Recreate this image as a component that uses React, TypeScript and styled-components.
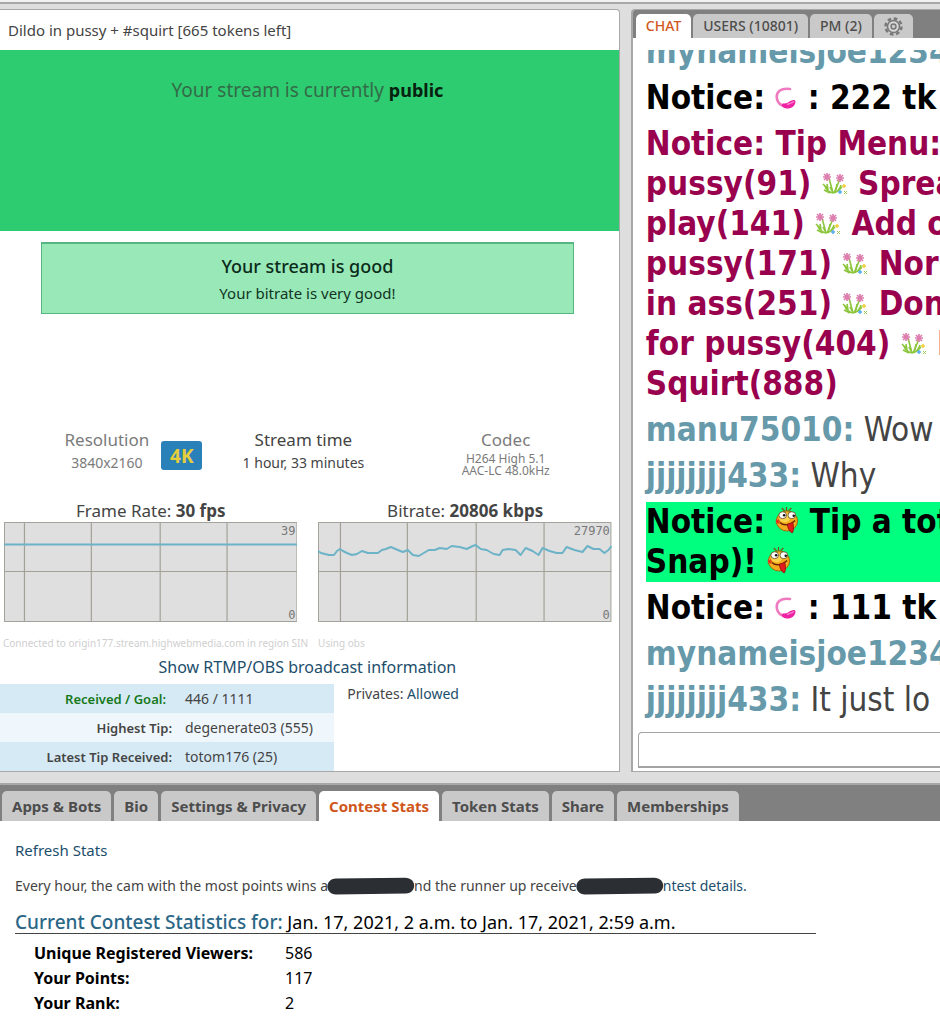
import React from "react";
import styled, { createGlobalStyle } from "styled-components";

const GlobalStyle = createGlobalStyle`
  * { box-sizing: border-box; }
  body {
    margin: 0;
    background: #fff;
    color: #444;
    font-family: "Noto Sans", "Open Sans", sans-serif;
    font-size: 14px;
    overflow-x: hidden;
  }
  a { color: #1c4e6c; text-decoration: none; }
`;

const TopStrip = styled.header`
  height: 4px;
  border-bottom: 2px solid #a8a8a8;
  background: #f1f1f1;
`;

const Workspace = styled.main`
  display: grid;
  grid-template-columns: minmax(0, 401fr) minmax(0, 200fr);
  gap: 11px;
  padding: 5px 0 11px;
  background: #dedede;
`;

/* ---------- broadcast panel ---------- */

const BroadcastPanel = styled.section`
  background: #fff;
  border: 1px solid #a8a8a8;
  border-left: 0;
  border-radius: 0 4px 0 0;
  overflow: hidden;
`;

const RoomSubject = styled.h1`
  margin: 0;
  padding: 0 8px;
  font-size: 15px;
  line-height: 40px;
  font-weight: 400;
`;

const StreamBanner = styled.div`
  height: 181px;
  padding-top: 28px;
  padding-right: 4px;
  background: #2ecc71;
  color: #336b47;
  font-size: 19px;
  line-height: 24px;
  text-align: center;
  strong { color: #06210f; font-weight: 700; font-size: 18px; }
`;

const HealthBox = styled.div`
  margin: 11px 45px 0 41px;
  padding: 9px 0 6px;
  border: 1px solid #56b581;
  border-top-width: 2px;
  background: #98e8b8;
  color: #123524;
  text-align: center;
`;

const HealthTitle = styled.div`
  font-size: 18px;
  line-height: 26px;
  font-weight: 500;
  color: #0b2b1a;
`;

const HealthText = styled.div`
  font-size: 15px;
  line-height: 28px;
`;

const StatsRow = styled.div`
  display: grid;
  grid-template-columns: repeat(3, 1fr);
  margin-top: 114px;
  padding-right: 12px;
`;

const Stat = styled.div<{ $dim?: boolean }>`
  color: ${(p) => (p.$dim ? "#7b7b7b" : "#444")};
  text-align: center;
`;

const StatWithBadge = styled.div`
  display: flex;
  justify-content: flex-end;
  gap: 12px;
`;

const StatLabel = styled.div`
  font-size: 17px;
  line-height: 24px;
`;

const StatValue = styled.div`
  font-size: 14px;
  line-height: 22px;
`;

const CodecValue = styled.div`
  font-size: 12px;
  line-height: 12px;
  padding-top: 1px;
`;

const QualityBadge = styled.span`
  margin-top: 13px;
  width: 41px;
  height: 29px;
  border-radius: 3px;
  background: #2a80b9;
  color: #e6cd3a;
  font-size: 19px;
  line-height: 30px;
  font-weight: 700;
  text-align: center;
`;

const Charts = styled.div`
  display: grid;
  grid-template-columns: 1fr 1fr;
  gap: 21px;
  padding: 22px 7px 0 4px;
`;

const ChartTitle = styled.div`
  font-size: 17px;
  line-height: 23px;
  text-align: center;
  strong { font-weight: 700; }
`;

const ChartFrame = styled.div`
  position: relative;
  height: 100px;
  svg { display: block; width: 100%; height: 100%; }
`;

const ChartScale = styled.div`
  position: absolute;
  inset: 0;
  display: flex;
  flex-direction: column;
  justify-content: space-between;
  align-items: flex-end;
  padding: 2px 2px 0;
  color: #777;
  font: 400 12px/14px "DejaVu Sans Mono", monospace;
`;

const OriginNote = styled.div`
  padding: 13px 3px 0;
  color: #cfcfcf;
  font-size: 10px;
  line-height: 16px;
  span { margin-left: 10px; }
`;

const EncoderLink = styled.div`
  padding: 4px 4px 5px 0;
  text-align: center;
  font-size: 16px;
  line-height: 24px;
`;

const TokenArea = styled.div`
  display: grid;
  grid-template-columns: 54% 1fr;
`;

const TokenTable = styled.table`
  width: 100%;
  border-collapse: collapse;
  tr { background: #d6eaf6; }
  tr:nth-child(even) { background: #f0f7fc; }
  th, td { height: 29px; padding: 0; }
  th { width: 172px; text-align: right; font-size: 13px; font-weight: 600; }
  td { padding-left: 13px; font-size: 14px; }
`;

const GoalHeading = styled.span`
  padding-right: 6px;
  color: #16791c;
`;

const Privates = styled.div`
  padding-left: 13px;
  line-height: 20px;
`;

/* ---------- chat panel ---------- */

const ChatPanel = styled.aside`
  display: flex;
  flex-direction: column;
  background: #fff;
  border: 1px solid #a8a8a8;
  border-width: 1px 0 1px 2px;
  border-radius: 4px 0 0 0;
  overflow: hidden;
`;

const ChatTabs = styled.nav`
  display: flex;
  align-items: flex-end;
  gap: 2px;
  height: 28px;
  flex: none;
  padding-left: 3px;
  background: #808080;
`;

const ChatTab = styled.button<{ $active?: boolean }>`
  height: 24px;
  flex: none;
  padding: 0 10px;
  border: 0;
  border-radius: 5px 5px 0 0;
  background: ${(p) => (p.$active ? "#fff" : "#c9c9c9")};
  color: ${(p) => (p.$active ? "#d0571b" : "#4d4d4d")};
  font: 500 14px/24px "Noto Sans", sans-serif;
  svg { display: block; }
`;

const Messages = styled.div`
  display: flex;
  flex-direction: column;
  justify-content: flex-end;
  gap: 6px;
  flex: 1 1 0;
  min-height: 0;
  margin-top: 12px;
  padding: 0 0 12px 13px;
  overflow: hidden;
  color: #444;
  font: 33px/40px "DejaVu Sans Condensed", "DejaVu Sans", sans-serif;
  white-space: nowrap;
`;

const Message = styled.div`
  flex: none;
`;

const Username = styled.strong`
  color: #6699aa;
`;

const Notice = styled.div<{ $color?: string; $fill?: string }>`
  flex: none;
  color: ${(p) => p.$color ?? "#000"};
  background: ${(p) => p.$fill ?? "transparent"};
  font-weight: 700;
  svg { display: inline-block; vertical-align: -1px; }
`;

const ChatInput = styled.input`
  flex: none;
  align-self: stretch;
  height: 36px;
  margin: 0 0 3px 5px;
  padding: 0 8px;
  border: 1px solid #a3a3a3;
  border-width: 1px 0 2px 1px;
  border-radius: 4px 0 0 0;
  background: #fff;
  font-size: 14px;
  outline: none;
`;

/* ---------- bottom area ---------- */

const PageTabs = styled.nav`
  display: flex;
  align-items: flex-end;
  gap: 3px;
  height: 38px;
  padding-left: 2px;
  border-top: 2px solid #a8a8a8;
  background: #808080;
`;

const PageTab = styled.button<{ $active?: boolean }>`
  height: 30px;
  flex: none;
  padding: 0 10px;
  border: 0;
  border-radius: 5px 5px 0 0;
  background: ${(p) => (p.$active ? "#fff" : "#c9c9c9")};
  color: ${(p) => (p.$active ? "#d0571b" : "#4d4d4d")};
  font: 700 15px/30px "Noto Sans", sans-serif;
`;

const StatsPage = styled.section`
  max-width: 832px;
  padding: 18px 16px 18px 15px;
`;

const RefreshLink = styled.a`
  font-size: 15px;
  line-height: 22px;
`;

const PrizeNote = styled.p`
  display: flex;
  align-items: center;
  margin: 13px 0;
  font-size: 14px;
  line-height: 24px;
  white-space: nowrap;
`;

const Redaction = styled.svg`
  flex: none;
  width: 88px;
  height: 18px;
  margin: 0 -1px;
  z-index: 1;
`;

const ContestHeading = styled.h2`
  margin: 0;
  border-bottom: 1px solid #444;
  color: #000;
  font-size: 18px;
  line-height: 22px;
  font-weight: 400;
  span { color: #2a6686; font-size: 19px; font-weight: 500; }
`;

const ContestTable = styled.table`
  margin-top: 6px;
  border-collapse: collapse;
  color: #000;
  font-size: 16px;
  line-height: 24px;
  th, td { height: 25px; padding: 0; text-align: left; }
  th { width: 270px; padding-left: 19px; font-weight: 700; }
`;

/* ---------- drawings ---------- */

const Toy = () => (
  <svg width="22" height="24" viewBox="2 0 22 24" aria-hidden="true">
    <path d="M17 3C8 1.500 2.500 6 4 13c.8 4 4 6.500 8 7" fill="none" stroke="#f07ac0" strokeWidth="2.600" strokeLinecap="round" />
    <path d="M9 18c2-1 3 0 6-1.500 3-2 7.500-4 7.500-.5-.3 4-4.500 7-9 6.500-3-.3-5.500-2.500-4.500-4.500z" fill="#ee22a2" />
    <path d="M14 18.500c2-.6 5-1.500 7-3" stroke="#fb84d0" strokeWidth="1.500" fill="none" />
  </svg>
);

const Flowers = () => (
  <svg width="26" height="24" viewBox="0 0 26 24" aria-hidden="true">
    <g fill="none" stroke="#8cc63c" strokeWidth="1.600">
      <path d="M7 6l4 15M18 7l-6 14M3 14c1 4 4 6 8 7M19 13c-1 5-4 7-8 8" />
      <path d="M1 12l4 4M5 12l1 6M8 15l2 4M15 12l-1 6M20 15l-4 4M2 18l6 3" />
    </g>
    <g fill="none" stroke="#dd7fae" strokeWidth="1.700">
      <path d="M5 1v8M1 5h8M2 2l6 6M8 2L2 8M18 2v8M14 6h8M15 3l6 6M21 3l-6 6" />
    </g>
    <path d="M20 14h4M22 12v4" stroke="#f0cf3a" strokeWidth="1.500" />
    <path d="M16 20h4M18 18v4" stroke="#55aef0" strokeWidth="1.500" />
    <path d="M22 19l3 3M25 19l-3 3" stroke="#9acb55" strokeWidth="1" />
  </svg>
);

const SillyFace = () => (
  <svg width="24" height="28" viewBox="0 0 25 29" aria-hidden="true">
    <path d="M12 6V1M10 5L7 2M14 5l3-3" stroke="#7d4a12" strokeWidth="1.200" />
    <ellipse cx="12.500" cy="15.500" rx="11" ry="10.500" fill="#f3ac1d" stroke="#a0640c" strokeWidth="1" />
    <ellipse cx="10" cy="12" rx="6" ry="5" fill="#fbd24b" />
    <ellipse cx="8" cy="9.500" rx="4" ry="3.600" fill="#fff" stroke="#5a3a0c" strokeWidth=".8" />
    <ellipse cx="17.500" cy="9.500" rx="4" ry="3.600" fill="#fff" stroke="#5a3a0c" strokeWidth=".8" />
    <circle cx="9.500" cy="9.500" r="1.300" fill="#111" />
    <circle cx="19.500" cy="10" r="1.300" fill="#111" />
    <path d="M5 17c4 4 11 3 16-2" fill="none" stroke="#6b2408" strokeWidth="1.500" />
    <path d="M13 19l5.500-2c1 4 1.500 8-.5 11-3-1-5-5-5-9z" fill="#e01c1c" stroke="#8d0d0d" strokeWidth=".8" />
    <path d="M1 14l3 4M4 14l-3 4M1 16h4" stroke="#e23a1c" strokeWidth="1.500" />
  </svg>
);

const Gear = () => (
  <svg width="19" height="19" viewBox="0 0 19 19" aria-hidden="true">
    <circle cx="9.500" cy="9.500" r="8" fill="none" stroke="#777" strokeWidth="2.400" strokeDasharray="3.600 2.680" />
    <circle cx="9.500" cy="9.500" r="6" fill="#d8d8d8" stroke="#777" strokeWidth="1.600" />
    <circle cx="9.500" cy="9.500" r="2.500" fill="#c9c9c9" stroke="#777" strokeWidth="1.400" />
  </svg>
);

const Chart = ({ lines, points, max }: { lines: number[]; points: string; max: string }) => (
  <ChartFrame>
    <svg viewBox="0 0 294 100" preserveAspectRatio="none" aria-hidden="true">
      <rect x=".5" y=".5" width="293" height="99" fill="#dfdfdf" stroke="#a3a39b" />
      <path d={"M0 49.500H294" + lines.map((x) => `M${x}.5 0V100`).join("")} stroke="#a3a196" strokeWidth="1.200" fill="none" />
      <polyline points={points} fill="none" stroke="#6cb3c8" strokeWidth="2" strokeLinejoin="round" />
    </svg>
    <ChartScale>
      <span>{max}</span>
      <span>0</span>
    </ChartScale>
  </ChartFrame>
);

const Pill = () => (
  <Redaction viewBox="0 0 88 18" preserveAspectRatio="none" aria-hidden="true">
    <path d="M9 1.500L78 .7c12 0 12 15.300 1 15.800L9 17.500C-2.500 17-2.500 2 9 1.500z" fill="#2b2f33" />
  </Redaction>
);

const BITRATE =
  "0,29 3,31 7,32 11,33 16,33 19,29 22,27 25,29 29,31 34,33 39,32 44,29 50,31 60,31 64,28 68,27 73,25 80,28 85,30 90,28 95,33 101,34 106,31 111,28 117,28 122,26 129,27 134,24 142,25 149,27 155,24 158,23 163,27 169,28 176,32 182,33 185,28 191,27 198,28 203,33 208,26 215,29 221,33 225,26 232,29 239,31 245,31 249,25 257,28 265,30 270,24 276,27 282,27 287,31 291,28 294,24";

const PAGE_TABS = ["Apps & Bots", "Bio", "Settings & Privacy", "Contest Stats", "Token Stats", "Share", "Memberships"];

export default function App() {
  return (
    <>
      <GlobalStyle />
      <TopStrip />
      <Workspace>
        <BroadcastPanel>
          <RoomSubject>Dildo in pussy + #squirt [665 tokens left]</RoomSubject>
          <StreamBanner>
            Your stream is currently <strong>public</strong>
          </StreamBanner>
          <HealthBox>
            <HealthTitle>Your stream is good</HealthTitle>
            <HealthText>Your bitrate is very good!</HealthText>
          </HealthBox>
          <StatsRow>
            <StatWithBadge>
              <Stat $dim>
                <StatLabel>Resolution</StatLabel>
                <StatValue>3840x2160</StatValue>
              </Stat>
              <QualityBadge>4K</QualityBadge>
            </StatWithBadge>
            <Stat>
              <StatLabel>Stream time</StatLabel>
              <StatValue>1 hour, 33 minutes</StatValue>
            </Stat>
            <Stat $dim>
              <StatLabel>Codec</StatLabel>
              <CodecValue>
                H264 High 5.1
                <br />
                AAC-LC 48.0kHz
              </CodecValue>
            </Stat>
          </StatsRow>
          <Charts>
            <div>
              <ChartTitle>
                Frame Rate: <strong>30 fps</strong>
              </ChartTitle>
              <Chart lines={[20, 87, 156, 223]} points="0,22.500 294,22.500" max="39" />
            </div>
            <div>
              <ChartTitle>
                Bitrate: <strong>20806 kbps</strong>
              </ChartTitle>
              <Chart lines={[22, 89, 158, 226]} points={BITRATE} max="27970" />
            </div>
          </Charts>
          <OriginNote>
            Connected to origin177.stream.highwebmedia.com in region SIN
            <span>Using obs</span>
          </OriginNote>
          <EncoderLink>
            <a href="#broadcast-info">Show RTMP/OBS broadcast information</a>
          </EncoderLink>
          <TokenArea>
            <TokenTable>
              <tbody>
                <tr>
                  <th scope="row">
                    <GoalHeading>Received / Goal:</GoalHeading>
                  </th>
                  <td>446 / 1111</td>
                </tr>
                <tr>
                  <th scope="row">Highest Tip:</th>
                  <td>degenerate03 (555)</td>
                </tr>
                <tr>
                  <th scope="row">Latest Tip Received:</th>
                  <td>totom176 (25)</td>
                </tr>
              </tbody>
            </TokenTable>
            <Privates>
              Privates: <a href="#privates">Allowed</a>
            </Privates>
          </TokenArea>
        </BroadcastPanel>

        <ChatPanel>
          <ChatTabs>
            <ChatTab type="button" $active>CHAT</ChatTab>
            <ChatTab type="button">USERS (10801)</ChatTab>
            <ChatTab type="button">PM (2)</ChatTab>
            <ChatTab type="button" aria-label="Chat settings">
              <Gear />
            </ChatTab>
          </ChatTabs>
          <Messages>
            <Message><Username>mynameisjoe1234</Username></Message>
            <Notice>Notice: <Toy /> : 222 tk</Notice>
            <Notice $color="#99004d">
              Notice: Tip Menu:
              <br />
              pussy(91) <Flowers /> Sprea
              <br />
              play(141) <Flowers /> Add o
              <br />
              pussy(171) <Flowers /> Nor
              <br />
              in ass(251) <Flowers /> Don
              <br />
              for pussy(404) <Flowers /> D
              <br />
              Squirt(888)
            </Notice>
            <Message><Username>manu75010:</Username> Wow</Message>
            <Message><Username>jjjjjjjj433:</Username> Why</Message>
            <Notice $fill="#00ff7f">
              Notice: <SillyFace /> Tip a tot
              <br />
              Snap)! <SillyFace />
            </Notice>
            <Notice>Notice: <Toy /> : 111 tk</Notice>
            <Message><Username>mynameisjoe1234</Username></Message>
            <Message><Username>jjjjjjjj433:</Username> It just lo</Message>
          </Messages>
          <ChatInput type="text" aria-label="Chat message" />
        </ChatPanel>
      </Workspace>

      <PageTabs>
        {PAGE_TABS.map((name) => (
          <PageTab key={name} type="button" $active={name === "Contest Stats"}>
            {name}
          </PageTab>
        ))}
      </PageTabs>
      <StatsPage>
        <RefreshLink href="#refresh">Refresh Stats</RefreshLink>
        <PrizeNote>
          <span>Every hour, the cam with the most points wins a</span>
          <Pill />
          <span>nd the runner up receive</span>
          <Pill />
          <a href="#contest">ntest details.</a>
        </PrizeNote>
        <ContestHeading>
          <span>Current Contest Statistics for:</span> Jan. 17, 2021, 2 a.m. to Jan. 17, 2021, 2:59 a.m.
        </ContestHeading>
        <ContestTable>
          <tbody>
            <tr>
              <th scope="row">Unique Registered Viewers:</th>
              <td>586</td>
            </tr>
            <tr>
              <th scope="row">Your Points:</th>
              <td>117</td>
            </tr>
            <tr>
              <th scope="row">Your Rank:</th>
              <td>2</td>
            </tr>
          </tbody>
        </ContestTable>
      </StatsPage>
    </>
  );
}
